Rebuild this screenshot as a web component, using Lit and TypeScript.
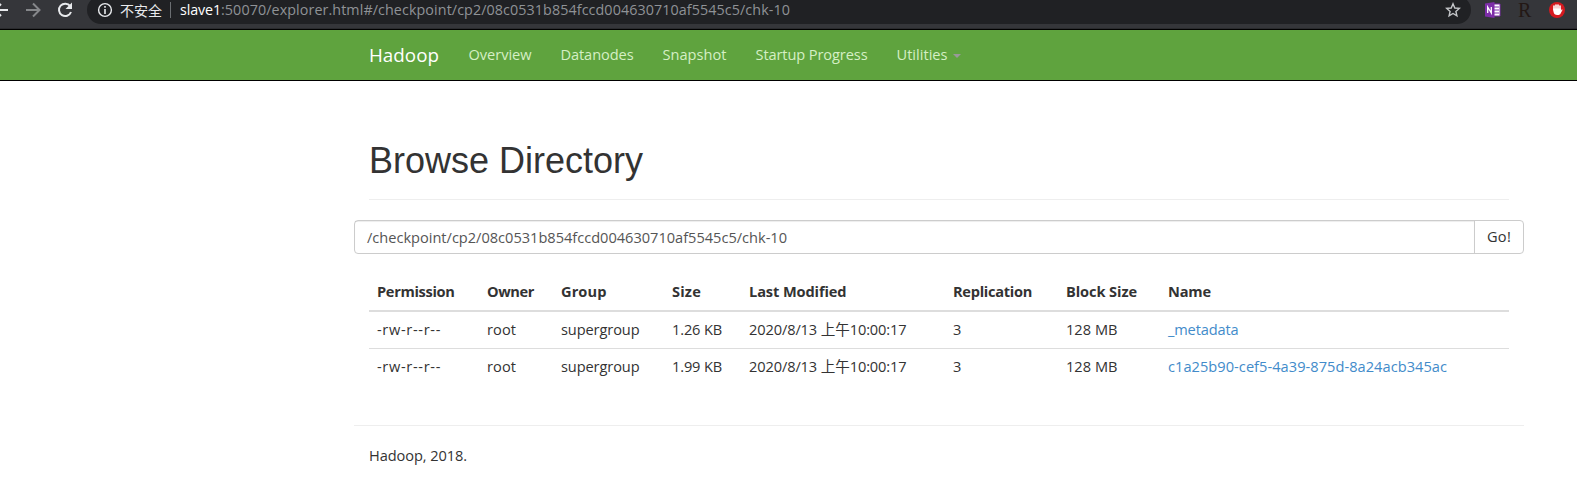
import { LitElement, html, css } from "lit";
import { customElement, property } from "lit/decorators.js";

/** A single-line label whose tracking is adjusted so that it fills `w` pixels. */
@customElement("fit-text")
class FitText extends LitElement {
  @property() text = "";
  @property({ type: Number }) w = 0;
  static styles = css`
    :host { display: inline-block; white-space: pre; }
    .t { display: inline-block; white-space: pre; }
  `;
  render() { return html`<span class="t">${this.text}</span>`; }
  updated() {
    const t = this.renderRoot.querySelector(".t") as HTMLElement;
    t.style.letterSpacing = "0px";
    const n = [...this.text].length;
    if (this.w && n) t.style.letterSpacing = (this.w - t.getBoundingClientRect().width) / n + "px";
  }
}

const fit = (text: string, w: number) => html`<fit-text .text=${text} .w=${w}></fit-text>`;

const columns: [string, number, number][] = [
  ["Permission", 110, 77.5], ["Owner", 74, 47], ["Group", 111, 45.5], ["Size", 77, 29],
  ["Last Modified", 204, 97.5], ["Replication", 113, 79], ["Block Size", 102, 71], ["Name", 349, 43],
];
const files: [string, number][][] = [
  [["-rw-r--r--", 64], ["root", 29], ["supergroup", 78.5], ["1.26 KB", 50], ["2020/8/13 上午10:00:17", 157.5], ["3", 8], ["128 MB", 51.5], ["_metadata", 70.5]],
  [["-rw-r--r--", 64], ["root", 29], ["supergroup", 78.5], ["1.99 KB", 50], ["2020/8/13 上午10:00:17", 157.5], ["3", 8], ["128 MB", 51.5], ["c1a25b90-cef5-4a39-875d-8a24acb345ac", 279]],
];

@customElement("app-root")
class AppRoot extends LitElement {
  static styles = css`
    :host { display: block; height: 501px; overflow: hidden; background: #fff; color: #333;
      font: 14.6px/18px "Open Sans", "Noto Sans", "Noto Sans CJK SC", sans-serif; }
    * { box-sizing: border-box; }
    .chrome { height: 30px; background: #35363a; border-bottom: 1px solid #000; display: flex; align-items: flex-start;
      box-shadow: inset 0 -1px #2a2b2e; }
    svg { display: block; flex: none; }
    .pill { width: 1384px; height: 28px; margin-top: -4px; border-radius: 14px; background: #202124; display: flex;
      align-items: center; color: #8f9296; font-size: 14.3px; line-height: 20px; }
    .info { margin-left: 10px; }
    .unsafe { font-family: "Noto Sans CJK SC", sans-serif; font-size: 14px; color: #e8eaed; margin-left: 7px; }
    .sep { width: 1px; height: 16px; background: #6b6e72; margin: 0 9px 0 8px; }
    .host { color: #fff; }
    .star { margin-left: auto; margin-right: 10px; }
    .ext { margin-left: 13px; }
    .r { font: 20px/23px "Liberation Serif", serif; height: 23px; margin-top: -1px; color: #231815; margin-left: 17px; width: 14px; }
    .hand { margin-left: 17px; }
    .nav { height: 51px; background: #5fa33e; border-bottom: 1px solid #000; padding-left: 369px; display: flex;
      align-items: flex-start; line-height: 48px; color: #d5efc5; }
    .brand { color: #fff; font-size: 18.8px; line-height: 50px; width: 99.5px; }
    .item { margin-right: 29px; }
    .caret { align-self: center; border: 4px solid transparent; border-top-color: #999; border-bottom: 0; margin-left: -24px; margin-top: 2px; }
    .page { width: 1170px; margin-left: 354px; padding-top: 56px; }
    h1 { font: 400 36px/40px "Liberation Sans", Arial, sans-serif; margin: 0 15px; height: 63px; padding-top: 4px;
      border-bottom: 1px solid #eee; }
    .group { display: flex; height: 34px; margin-top: 20px; border: 1px solid #ccc; border-radius: 4px; }
    .path { flex: 1; padding: 7px 12px 5px; color: #555; box-shadow: inset 0 1px 1px rgba(0,0,0,.075); }
    .go { width: 49px; border-left: 1px solid #ccc; padding: 6px 12px; white-space: nowrap; }
    .table { margin: 20px 15px 0; }
    .row { display: flex; height: 37px; padding: 8px 0 0 8px; border-top: 1px solid #ddd; }
    .head { font-weight: 700; height: 36px; border-top: 0; }
    .first { border-top-width: 2px; height: 38px; }
    .cell { flex: none; }
    .link { color: #428bca; }
    footer { margin-top: 40px; border-top: 1px solid #eee; padding: 20px 15px; }
  `;

  render() {
    const widths = columns.map((c) => c[1]);
    return html`
      <div class="chrome">
        <svg width="87" height="28" viewBox="0 0 87 28" fill="none" stroke-width="2">
          <path d="M-5 10H8M1 4L-5 10L1 16" stroke="#e8eaed"/>
          <path d="M26 10H39M33 3.5L39.5 10L33 16.5" stroke="#85878a"/>
          <path d="M70.2 6.2A6.2 6.2 0 1 0 71 12" stroke="#e8eaed"/>
          <path d="M72 2.5V9H65.5Z" fill="#e8eaed"/>
        </svg>
        <div class="pill">
          <svg class="info" width="16" height="16" viewBox="0 0 16 16" fill="none" stroke="#e8eaed">
            <circle cx="8" cy="8" r="6.4" stroke-width="1.4"/><path d="M8 7V12M8 4V5.8" stroke-width="1.6"/>
          </svg>
          <span class="unsafe">${fit("不安全", 42)}</span><span class="sep"></span>
          <span class="host">${fit("slave1", 41)}</span>${fit(":50070/explorer.html#/checkpoint/cp2/08c0531b854fccd004630710af5545c5/chk-10", 569)}
          <svg class="star" width="16" height="16" viewBox="0 0 16 16" fill="none" stroke="#c5c7ca" stroke-width="1.4">
            <path d="M8 1.8L9.8 6L14.3 6.4L10.9 9.4L11.9 13.8L8 11.5L4.1 13.8L5.1 9.4L1.7 6.4L6.2 6Z"/>
          </svg>
        </div>
        <svg class="ext" width="17" height="20" viewBox="0 0 17 20">
          <path d="M9 4H16V16H9Z" fill="#fff" stroke="#7d2da8"/><path d="M10 7H15M10 10H15M10 13H15" stroke="#7d2da8"/>
          <path d="M1 3.5L10.5 2V18L1 16.5Z" fill="#7d2da8"/>
          <path d="M3.7 13V7L7.3 13V7" fill="none" stroke="#fff" stroke-width="1.3"/>
        </svg>
        <span class="r">R</span>
        <svg class="hand" width="18" height="20" viewBox="0 0 18 20">
          <circle cx="8" cy="10" r="8" fill="#d5191f"/>
          <path d="M5 10V6M7 10V5M9 10V5M11 10V6" stroke="#fff" stroke-width="1.6" stroke-linecap="round"/>
          <path d="M4.2 8.5H11.8V11L12.8 9.2L13.6 9.8L11.2 14.2Q8 16 5.4 14Q4.2 12.5 4.2 8.5" fill="#fff"/>
        </svg>
      </div>
      <div class="nav">
        <span class="brand">${fit("Hadoop", 70)}</span>
        ${([["Overview", 63], ["Datanodes", 73], ["Snapshot", 64], ["Startup Progress", 112], ["Utilities", 51]] as [string, number][])
          .map(([t, w]) => html`<span class="item">${fit(t, w)}</span>`)}
        <span class="caret"></span>
      </div>
      <div class="page">
        <h1>${fit("Browse Directory", 274)}</h1>
        <div class="group">
          <div class="path">${fit("/checkpoint/cp2/08c0531b854fccd004630710af5545c5/chk-10", 420)}</div>
          <div class="go">${fit("Go!", 24)}</div>
        </div>
        <div class="table">
          <div class="row head">${columns.map(([t, cw, w]) => html`<span class="cell" style="width:${cw}px">${fit(t, w)}</span>`)}</div>
          ${files.map((f, r) => html`<div class="row ${r === 0 ? "first" : ""}">
            ${f.map(([t, w], i) => html`<span class="cell ${i === 7 ? "link" : ""}" style="width:${widths[i]}px">${fit(t, w)}</span>`)}
          </div>`)}
        </div>
        <footer>${fit("Hadoop, 2018.", 98)}</footer>
      </div>`;
  }
}
